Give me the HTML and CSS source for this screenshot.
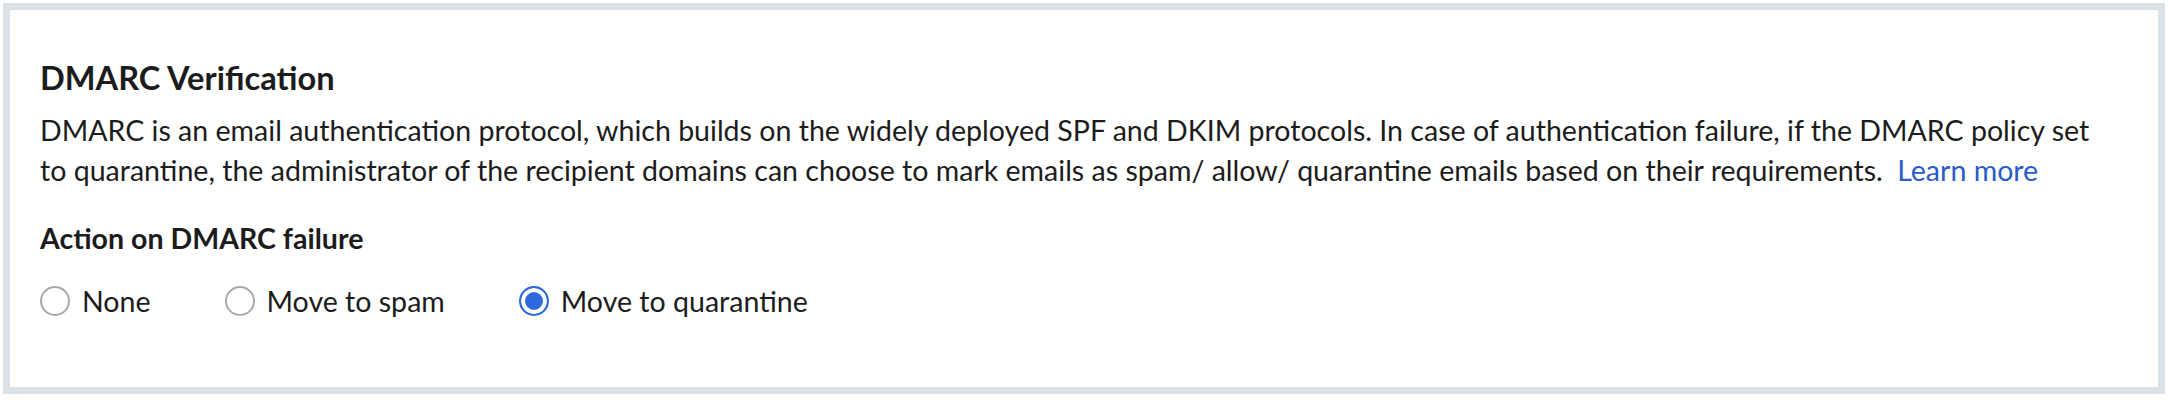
FILE: index.html
```html
<!DOCTYPE html>
<html lang="en">
<head>
    <meta charset="UTF-8">
    <meta name="viewport" content="width=device-width, initial-scale=1.0">
    <title>DMARC Verification</title>
    <link rel="stylesheet" href="styles.css">
</head>
<body>

    <div class="card">
        <h2 class="card-title">DMARC Verification</h2>
        <p class="card-desc">
            DMARC is an email authentication protocol, which builds on the widely deployed SPF and DKIM protocols. In case of authentication failure, if the DMARC policy set to quarantine, the administrator of the recipient domains can choose to mark emails as spam/ allow/ quarantine emails based on their requirements.
            <a href="#" class="learn-more">Learn more</a>
        </p>

        <div class="field-label">Action on DMARC failure</div>

        <div class="radio-group">
            <label class="radio-item">
                <input type="radio" name="dmarc_action" value="none">
                <span>None</span>
            </label>
            <label class="radio-item">
                <input type="radio" name="dmarc_action" value="spam">
                <span>Move to spam</span>
            </label>
            <label class="radio-item">
                <input type="radio" name="dmarc_action" value="quarantine" checked>
                <span>Move to quarantine</span>
            </label>
        </div>
    </div>

</body>
</html>
```

FILE: styles.css
```css
/* Estilos da caixa de configuração DMARC */
body {
    font-family: Lato, "Open Sans", sans-serif;
    background-color: #fff;
    color: #1c1c1c;
    margin: 3px;
}

.card {
    border: 7px solid #dae2e8;
    padding: 48px 60px 69px 30px;
    background-color: #fff;
}

.card-title {
    font-size: 32.6px;
    font-weight: bold;
    line-height: normal;
    margin: 0 0 13px;
}

.card-desc {
    font-size: 28.56px;
    line-height: 40px;
    margin: 0 0 31px;
}

.learn-more {
    color: #2a5bc8;
    text-decoration: none;
    margin-left: 7px;
}

.field-label {
    font-size: 28.56px;
    font-weight: bold;
    margin-bottom: 29px;
}

.radio-group {
    display: flex;
    gap: 74px;
    font-size: 28.56px;
}

.radio-item {
    display: flex;
    align-items: center;
    gap: 12px;
    cursor: pointer;
}

.radio-item input {
    appearance: none;
    -webkit-appearance: none;
    width: 30px;
    height: 30px;
    margin: 0;
    border: 2px solid #a9a9a9;
    border-radius: 50%;
    background-color: #fff;
}

.radio-item input:checked {
    border-color: #2e6ade;
    background-color: #2e6ade;
    box-shadow: inset 0 0 0 4px #fff;
}
```
